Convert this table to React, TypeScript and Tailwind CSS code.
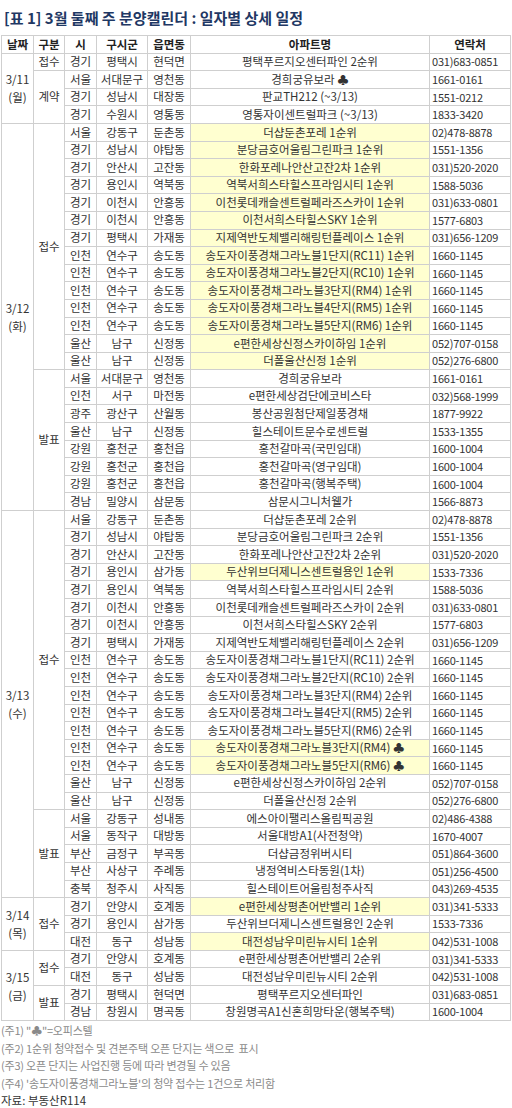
type Row = {
  date?: { label: string; day: string; span: number };
  kind?: { label: string; span: number };
  si: string;
  gu: string;
  dong: string;
  apt: string;
  tel: string;
  hl?: boolean;
};

const rows: Row[] = [
  { date: { label: "3/11", day: "(월)", span: 4 }, kind: { label: "접수", span: 1 }, si: "경기", gu: "평택시", dong: "현덕면", apt: "평택푸르지오센터파인 2순위", tel: "031)683-0851" },
  { kind: { label: "계약", span: 3 }, si: "서울", gu: "서대문구", dong: "영천동", apt: "경희궁유보라 ♣", tel: "1661-0161" },
  { si: "경기", gu: "성남시", dong: "대장동", apt: "판교TH212 (~3/13)", tel: "1551-0212" },
  { si: "경기", gu: "수원시", dong: "영통동", apt: "영통자이센트럴파크 (~3/13)", tel: "1833-3420" },

  { date: { label: "3/12", day: "(화)", span: 22 }, kind: { label: "접수", span: 14 }, si: "서울", gu: "강동구", dong: "둔촌동", apt: "더샵둔촌포레 1순위", tel: "02)478-8878", hl: true },
  { si: "경기", gu: "성남시", dong: "야탑동", apt: "분당금호어울림그린파크 1순위", tel: "1551-1356", hl: true },
  { si: "경기", gu: "안산시", dong: "고잔동", apt: "한화포레나안산고잔2차 1순위", tel: "031)520-2020", hl: true },
  { si: "경기", gu: "용인시", dong: "역북동", apt: "역북서희스타힐스프라임시티 1순위", tel: "1588-5036", hl: true },
  { si: "경기", gu: "이천시", dong: "안흥동", apt: "이천롯데캐슬센트럴페라즈스카이 1순위", tel: "031)633-0801", hl: true },
  { si: "경기", gu: "이천시", dong: "안흥동", apt: "이천서희스타힐스SKY 1순위", tel: "1577-6803", hl: true },
  { si: "경기", gu: "평택시", dong: "가재동", apt: "지제역반도체밸리해링턴플레이스 1순위", tel: "031)656-1209", hl: true },
  { si: "인천", gu: "연수구", dong: "송도동", apt: "송도자이풍경채그라노블1단지(RC11) 1순위", tel: "1660-1145", hl: true },
  { si: "인천", gu: "연수구", dong: "송도동", apt: "송도자이풍경채그라노블2단지(RC10) 1순위", tel: "1660-1145", hl: true },
  { si: "인천", gu: "연수구", dong: "송도동", apt: "송도자이풍경채그라노블3단지(RM4) 1순위", tel: "1660-1145", hl: true },
  { si: "인천", gu: "연수구", dong: "송도동", apt: "송도자이풍경채그라노블4단지(RM5) 1순위", tel: "1660-1145", hl: true },
  { si: "인천", gu: "연수구", dong: "송도동", apt: "송도자이풍경채그라노블5단지(RM6) 1순위", tel: "1660-1145", hl: true },
  { si: "울산", gu: "남구", dong: "신정동", apt: "e편한세상신정스카이하임 1순위", tel: "052)707-0158", hl: true },
  { si: "울산", gu: "남구", dong: "신정동", apt: "더폴울산신정 1순위", tel: "052)276-6800", hl: true },
  { kind: { label: "발표", span: 8 }, si: "서울", gu: "서대문구", dong: "영천동", apt: "경희궁유보라", tel: "1661-0161" },
  { si: "인천", gu: "서구", dong: "마전동", apt: "e편한세상검단에코비스타", tel: "032)568-1999" },
  { si: "광주", gu: "광산구", dong: "산월동", apt: "봉산공원첨단제일풍경채", tel: "1877-9922" },
  { si: "울산", gu: "남구", dong: "신정동", apt: "힐스테이트문수로센트럴", tel: "1533-1355" },
  { si: "강원", gu: "홍천군", dong: "홍천읍", apt: "홍천갈마곡(국민임대)", tel: "1600-1004" },
  { si: "강원", gu: "홍천군", dong: "홍천읍", apt: "홍천갈마곡(영구임대)", tel: "1600-1004" },
  { si: "강원", gu: "홍천군", dong: "홍천읍", apt: "홍천갈마곡(행복주택)", tel: "1600-1004" },
  { si: "경남", gu: "밀양시", dong: "삼문동", apt: "삼문시그니처웰가", tel: "1566-8873" },

  { date: { label: "3/13", day: "(수)", span: 22 }, kind: { label: "접수", span: 17 }, si: "서울", gu: "강동구", dong: "둔촌동", apt: "더샵둔촌포레 2순위", tel: "02)478-8878" },
  { si: "경기", gu: "성남시", dong: "야탑동", apt: "분당금호어울림그린파크 2순위", tel: "1551-1356" },
  { si: "경기", gu: "안산시", dong: "고잔동", apt: "한화포레나안산고잔2차 2순위", tel: "031)520-2020" },
  { si: "경기", gu: "용인시", dong: "삼가동", apt: "두산위브더제니스센트럴용인 1순위", tel: "1533-7336", hl: true },
  { si: "경기", gu: "용인시", dong: "역북동", apt: "역북서희스타힐스프라임시티 2순위", tel: "1588-5036" },
  { si: "경기", gu: "이천시", dong: "안흥동", apt: "이천롯데캐슬센트럴페라즈스카이 2순위", tel: "031)633-0801" },
  { si: "경기", gu: "이천시", dong: "안흥동", apt: "이천서희스타힐스SKY 2순위", tel: "1577-6803" },
  { si: "경기", gu: "평택시", dong: "가재동", apt: "지제역반도체밸리해링턴플레이스 2순위", tel: "031)656-1209" },
  { si: "인천", gu: "연수구", dong: "송도동", apt: "송도자이풍경채그라노블1단지(RC11) 2순위", tel: "1660-1145" },
  { si: "인천", gu: "연수구", dong: "송도동", apt: "송도자이풍경채그라노블2단지(RC10) 2순위", tel: "1660-1145" },
  { si: "인천", gu: "연수구", dong: "송도동", apt: "송도자이풍경채그라노블3단지(RM4) 2순위", tel: "1660-1145" },
  { si: "인천", gu: "연수구", dong: "송도동", apt: "송도자이풍경채그라노블4단지(RM5) 2순위", tel: "1660-1145" },
  { si: "인천", gu: "연수구", dong: "송도동", apt: "송도자이풍경채그라노블5단지(RM6) 2순위", tel: "1660-1145" },
  { si: "인천", gu: "연수구", dong: "송도동", apt: "송도자이풍경채그라노블3단지(RM4) ♣", tel: "1660-1145", hl: true },
  { si: "인천", gu: "연수구", dong: "송도동", apt: "송도자이풍경채그라노블5단지(RM6) ♣", tel: "1660-1145", hl: true },
  { si: "울산", gu: "남구", dong: "신정동", apt: "e편한세상신정스카이하임 2순위", tel: "052)707-0158" },
  { si: "울산", gu: "남구", dong: "신정동", apt: "더폴울산신정 2순위", tel: "052)276-6800" },
  { kind: { label: "발표", span: 5 }, si: "서울", gu: "강동구", dong: "성내동", apt: "에스아이팰리스올림픽공원", tel: "02)486-4388" },
  { si: "서울", gu: "동작구", dong: "대방동", apt: "서울대방A1(사전청약)", tel: "1670-4007" },
  { si: "부산", gu: "금정구", dong: "부곡동", apt: "더샵금정위버시티", tel: "051)864-3600" },
  { si: "부산", gu: "사상구", dong: "주례동", apt: "냉정역비스타동원(1차)", tel: "051)256-4500" },
  { si: "충북", gu: "청주시", dong: "사직동", apt: "힐스테이트어울림청주사직", tel: "043)269-4535" },

  { date: { label: "3/14", day: "(목)", span: 3 }, kind: { label: "접수", span: 3 }, si: "경기", gu: "안양시", dong: "호계동", apt: "e편한세상평촌어반밸리 1순위", tel: "031)341-5333", hl: true },
  { si: "경기", gu: "용인시", dong: "삼가동", apt: "두산위브더제니스센트럴용인 2순위", tel: "1533-7336" },
  { si: "대전", gu: "동구", dong: "성남동", apt: "대전성남우미린뉴시티 1순위", tel: "042)531-1008", hl: true },

  { date: { label: "3/15", day: "(금)", span: 4 }, kind: { label: "접수", span: 2 }, si: "경기", gu: "안양시", dong: "호계동", apt: "e편한세상평촌어반밸리 2순위", tel: "031)341-5333" },
  { si: "대전", gu: "동구", dong: "성남동", apt: "대전성남우미린뉴시티 2순위", tel: "042)531-1008" },
  { kind: { label: "발표", span: 2 }, si: "경기", gu: "평택시", dong: "현덕면", apt: "평택푸르지오센터파인", tel: "031)683-0851" },
  { si: "경남", gu: "창원시", dong: "명곡동", apt: "창원명곡A1신혼희망타운(행복주택)", tel: "1600-1004" },
];

const cell = "border border-[#cfcfcf] text-center align-middle whitespace-nowrap p-0";

export default function App() {
  return (
    <div
      className="w-[512px] bg-white text-[#333] pt-[8px]"
      style={{ fontFamily: '"Noto Sans CJK KR", "Noto Sans", sans-serif' }}
    >
      <h1 className="pl-[4px] text-[15px] font-bold leading-[19px] text-[#1f3864]">
        [표 1] 3월 둘째 주 분양캘린더 : 일자별 상세 일정
      </h1>
      <table className="mt-[8px] ml-px w-[509px] table-fixed border-collapse text-[11.5px] leading-none">
        <colgroup>
          <col className="w-[32px]" />
          <col className="w-[31px]" />
          <col className="w-[32px]" />
          <col className="w-[51px]" />
          <col className="w-[43px]" />
          <col className="w-[239px]" />
          <col className="w-[81px]" />
        </colgroup>
        <thead>
          <tr className="h-[17.6px] font-bold text-[#222]">
            <td className={cell}>날짜</td>
            <td className={cell}>구분</td>
            <td className={cell}>시</td>
            <td className={cell}>구시군</td>
            <td className={cell}>읍면동</td>
            <td className={cell}>아파트명</td>
            <td className={cell}>연락처</td>
          </tr>
        </thead>
        <tbody>
          {rows.map((r, i) => (
            <tr key={i} className="h-[17.6px]">
              {r.date && (
                <td rowSpan={r.date.span} className={cell + " leading-[18px]"}>
                  {r.date.label}
                  <br />
                  {r.date.day}
                </td>
              )}
              {r.kind && (
                <td rowSpan={r.kind.span} className={cell}>
                  {r.kind.label}
                </td>
              )}
              <td className={cell}>{r.si}</td>
              <td className={cell}>{r.gu}</td>
              <td className={cell}>{r.dong}</td>
              <td className={cell + (r.hl ? " bg-[#ffffd0]" : "")}>{r.apt}</td>
              <td className="border border-[#cfcfcf] p-0 pl-[2px] text-left align-middle whitespace-nowrap text-[11px] tracking-[-0.2px]">
                {r.tel}
              </td>
            </tr>
          ))}
        </tbody>
      </table>
      <div className="mt-[1px] pl-px text-[11px] leading-[17.5px] text-[#8a8a8a] tracking-[-0.2px]">
        <p>(주1) "♣"=오피스텔</p>
        <p>(주2) 1순위 청약접수 및 견본주택 오픈 단지는 색으로&nbsp; 표시</p>
        <p>(주3) 오픈 단지는 사업진행 등에 따라 변경될 수 있음</p>
        <p>(주4) '송도자이풍경채그라노블'의 청약 접수는 1건으로 처리함</p>
      </div>
      <p className="pl-px text-[11.5px] leading-[16px] text-[#333]">자료: 부동산R114</p>
    </div>
  );
}
